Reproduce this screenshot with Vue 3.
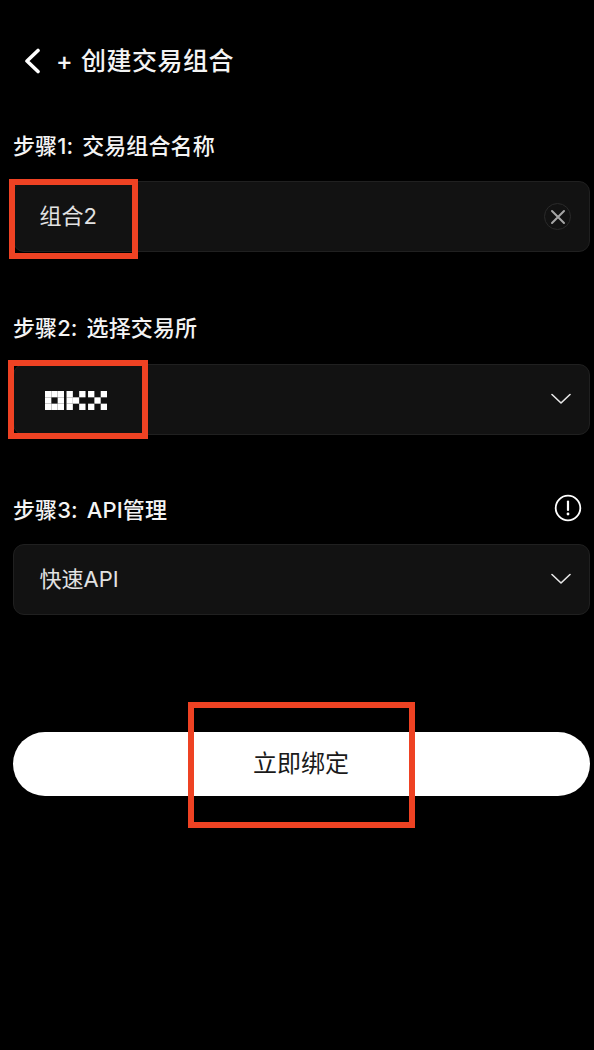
<script setup>
const marks = [
  { id: 'name', left: 9, top: 179, width: 129, height: 80 },
  { id: 'exchange', left: 8, top: 360, width: 140, height: 79 },
  { id: 'bind', left: 188, top: 702, width: 227, height: 126 }
]
const cell = 6.33
const logoCells = [
  [0,0],[1,0],[2,0],[0,1],[2,1],[0,2],[1,2],[2,2],
  [3.4,0],[3.4,1],[3.4,2],[4.4,1],[5.4,0],[5.4,2],
  [6.8,0],[8.8,0],[7.8,1],[6.8,2],[8.8,2]
]
</script>

<template>
  <div class="page">
    <header class="header">
      <svg class="back" width="18" height="26" viewBox="0 0 18 26" fill="none">
        <path d="M15 2.5 L4 13 L15 23.5" stroke="#fff" stroke-width="3.6" stroke-linecap="round" stroke-linejoin="round" />
      </svg>
      <h1 class="title"><span class="plus">+</span>创建交易组合</h1>
    </header>

    <section class="step step-one">
      <div class="label-row"><span>步骤1: 交易组合名称</span></div>
      <div class="field">
        <span class="value">组合2</span>
        <span class="clear">
          <svg width="16" height="16" viewBox="0 0 16 16" fill="none">
            <path d="M2 2 L14 14 M14 2 L2 14" stroke="#a6a6a6" stroke-width="2" stroke-linecap="round" />
          </svg>
        </span>
      </div>
    </section>

    <section class="step step-two">
      <div class="label-row"><span>步骤2: 选择交易所</span></div>
      <div class="field">
        <svg class="okx" width="62" height="19" viewBox="0 0 62 19" role="img" aria-label="OKX">
          <rect v-for="(c, i) in logoCells" :key="i" :x="c[0] * cell" :y="c[1] * cell" :width="cell" :height="cell" fill="#fff" />
        </svg>
        <svg class="chevron" width="20" height="12" viewBox="0 0 20 12" fill="none">
          <path d="M1 1.5 L10 10 L19 1.5" stroke="#e8e8e8" stroke-width="1.6" stroke-linecap="round" stroke-linejoin="round" />
        </svg>
      </div>
    </section>

    <section class="step step-three">
      <div class="label-row">
        <span>步骤3: API管理</span>
        <svg class="info" width="28" height="28" viewBox="0 0 28 28" fill="none">
          <circle cx="14" cy="14" r="12.3" stroke="#fff" stroke-width="1.8" />
          <path d="M14 7.5 V16" stroke="#fff" stroke-width="2.2" stroke-linecap="round" />
          <circle cx="14" cy="20" r="1.4" fill="#fff" />
        </svg>
      </div>
      <div class="field">
        <span class="value">快速API</span>
        <svg class="chevron" width="20" height="12" viewBox="0 0 20 12" fill="none">
          <path d="M1 1.5 L10 10 L19 1.5" stroke="#e8e8e8" stroke-width="1.6" stroke-linecap="round" stroke-linejoin="round" />
        </svg>
      </div>
    </section>

    <button class="bind" type="button">立即绑定</button>

    <div
      v-for="m in marks"
      :key="m.id"
      class="mark"
      :style="{ left: m.left + 'px', top: m.top + 'px', width: m.width + 'px', height: m.height + 'px' }"
    ></div>
  </div>
</template>

<style scoped>
.page {
  position: relative;
  box-sizing: border-box;
  width: 594px;
  height: 1050px;
  overflow: hidden;
  padding: 44px 4px 0 13px;
  background: #000;
  color: #fff;
  font-family: "Inter", "Noto Sans CJK SC", sans-serif;
}
.header {
  display: flex;
  align-items: center;
  height: 34px;
  padding-left: 10px;
}
.back {
  flex: none;
}
.title {
  margin: 0 0 0 15px;
  font-size: 25px;
  letter-spacing: 0.5px;
  line-height: 34px;
  font-weight: 500;
  color: #f4f4f4;
}
.plus {
  display: inline-block;
  width: 25px;
}
.label-row {
  display: flex;
  align-items: center;
  justify-content: space-between;
  height: 30px;
  font-size: 22px;
  font-weight: 500;
  letter-spacing: 0.1px;
  word-spacing: 3px;
  color: #f4f4f4;
}
.step-one {
  margin-top: 51px;
}
.step-two {
  margin-top: 59px;
}
.step-three {
  margin-top: 58px;
}
.step .field {
  margin-top: 22px;
}
.step-two .field {
  margin-top: 23px;
}
.step-three .field {
  margin-top: 21px;
}
.info {
  margin-right: 8px;
}
.field {
  box-sizing: border-box;
  display: flex;
  align-items: center;
  justify-content: space-between;
  height: 71px;
  padding: 0 18px 0 26px;
  background: #121212;
  border: 1.5px solid #202020;
  border-radius: 11px;
}
.value {
  margin-top: -6px;
  margin-left: -0.5px;
  font-size: 22px;
  color: #e2e2e2;
}
.clear {
  box-sizing: border-box;
  display: flex;
  align-items: center;
  justify-content: center;
  width: 27px;
  height: 27px;
  border: 1px solid #2a2a2a;
  border-radius: 50%;
}
.okx {
  margin-top: 2px;
  margin-left: 5px;
}
.chevron {
  margin-top: -2px;
}
.bind {
  display: block;
  width: 577px;
  height: 64px;
  margin-top: 117px;
  padding: 0 0 5px;
  border: 0;
  border-radius: 32px;
  background: #fff;
  color: #1a1a1a;
  font-family: inherit;
  font-size: 24px;
  font-weight: 400;
  text-indent: -1px;
}
.mark {
  position: absolute;
  box-sizing: border-box;
  border: 6px solid #ee4223;
}
</style>
